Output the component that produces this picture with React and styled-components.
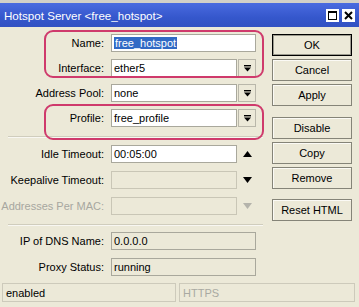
import React from "react"
import styled, { createGlobalStyle } from "styled-components"

const GlobalStyle = createGlobalStyle`
  html, body {
    margin: 0;
    padding: 0;
    background: #ece9d8;
  }
  body {
    font-family: "Liberation Sans", Arial, sans-serif;
    font-size: 11px;
    color: #000;
  }
`

const Window = styled.div`
  width: 359px;
  height: 307px;
  display: flex;
  flex-direction: column;
  background: #ece9d8;
  overflow: hidden;
`

const TopEdge = styled.div`
  height: 3px;
  background: #d2d0c8;
`

const TitleBar = styled.div`
  height: 24px;
  display: flex;
  align-items: center;
  justify-content: space-between;
  padding: 0 4px 0 4px;
  background: linear-gradient(#4a6be0, #3557cc 60%, #3251c2);
  color: #fff;
  font-size: 11.6px;
`

const TitleButtons = styled.div`
  display: flex;
  gap: 3px;
`

const TitleButton = styled.div`
  width: 13px;
  height: 13px;
  background: #fff;
  display: flex;
  align-items: center;
  justify-content: center;
`

const Body = styled.div`
  display: flex;
  padding-top: 7px;
`

const Form = styled.div`
  position: relative;
  width: 268px;
  display: flex;
  flex-direction: column;
`

const Row = styled.div`
  display: flex;
  align-items: center;
  height: 18px;
  margin-top: ${(p) => p.$top || 0}px;
`

const Label = styled.div`
  width: 104px;
  text-align: right;
  margin-right: 7px;
  white-space: nowrap;
  color: ${(p) => (p.$disabled ? "#a7a7a0" : "#000")};
`

const Field = styled.div`
  box-sizing: border-box;
  height: 18px;
  width: ${(p) => p.$w}px;
  border: 1px solid ${(p) => (p.$disabled ? "#c9c6b6" : "#a9a89c")};
  background: ${(p) => (p.$readonly || p.$disabled ? "#ece9d8" : "#fff")};
  padding-left: 2px;
  display: flex;
  align-items: center;
  white-space: nowrap;
`

const Selected = styled.span`
  background: #316ac5;
  color: #fff;
  padding: 0 1px;
`

const DropButton = styled.div`
  box-sizing: border-box;
  width: 18px;
  height: 18px;
  margin-left: 1px;
  border: 1px solid #b9b7aa;
  background: #ece9d8;
  display: flex;
  align-items: center;
  justify-content: center;
`

const Arrow = styled.div`
  width: 18px;
  margin-left: 1px;
  display: flex;
  align-items: center;
  justify-content: center;
`

const Separator = styled.div`
  height: 1px;
  margin: ${(p) => p.$top}px 5px 0 8px;
  background: #d0cdbd;
  border-bottom: 1px solid #f8f7f2;
`

const Highlight = styled.div`
  position: absolute;
  left: 44px;
  width: 220px;
  top: ${(p) => p.$top}px;
  height: ${(p) => p.$h}px;
  box-sizing: border-box;
  border: 2px solid #cf3a6c;
  border-radius: 9px;
  pointer-events: none;
`

const ButtonColumn = styled.div`
  width: 80px;
  margin-left: 4px;
  display: flex;
  flex-direction: column;
`

const Button = styled.div`
  box-sizing: border-box;
  height: 22px;
  margin-top: ${(p) => p.$top ?? 3}px;
  border: 1px solid ${(p) => (p.$default ? "#000" : "#858478")};
  box-shadow: ${(p) =>
    p.$default ? "inset 0 0 0 1px #9c9b8f" : "inset 1px 1px 0 #fbfaf5"};
  background: #ece9d8;
  display: flex;
  align-items: center;
  justify-content: center;
`

const StatusBar = styled.div`
  display: flex;
  gap: 3px;
  padding: 0 4px 0 2px;
  margin-top: 7px;
`

const StatusPanel = styled.div`
  box-sizing: border-box;
  height: 19px;
  width: ${(p) => p.$w}px;
  border: 1px solid #cdcabb;
  padding-left: 3px;
  display: flex;
  align-items: center;
  color: ${(p) => (p.$muted ? "#a9a9a2" : "#000")};
`

const DropGlyph = () => (
  <svg width="7" height="7" viewBox="0 0 7 7">
    <rect x="0" y="0" width="7" height="1.4" fill="#000" />
    <polygon points="0,2.5 7,2.5 3.5,6.5" fill="#000" />
  </svg>
)

const TriGlyph = ({ up, color }) => (
  <svg width="9" height="6" viewBox="0 0 9 6">
    <polygon points={up ? "0,6 9,6 4.5,0" : "0,0 9,0 4.5,6"} fill={color} />
  </svg>
)

export default function App() {
  return (
    <Window>
      <GlobalStyle />
      <TopEdge />
      <TitleBar>
        <span>Hotspot Server &lt;free_hotspot&gt;</span>
        <TitleButtons>
          <TitleButton>
            <svg width="9" height="9" viewBox="0 0 9 9">
              <rect x="0.5" y="0.5" width="8" height="8" fill="none" stroke="#000" />
              <rect x="0" y="0" width="9" height="2" fill="#000" />
            </svg>
          </TitleButton>
          <TitleButton>
            <svg width="9" height="9" viewBox="0 0 9 9">
              <path d="M1 1 L8 8 M8 1 L1 8" stroke="#000" strokeWidth="2" />
            </svg>
          </TitleButton>
        </TitleButtons>
      </TitleBar>

      <Body>
        <Form>
          <Row>
            <Label>Name:</Label>
            <Field $w={145}>
              <Selected>free_hotspot</Selected>
            </Field>
          </Row>
          <Row $top={7}>
            <Label>Interface:</Label>
            <Field $w={126}>ether5</Field>
            <DropButton>
              <DropGlyph />
            </DropButton>
          </Row>
          <Row $top={7}>
            <Label>Address Pool:</Label>
            <Field $w={126}>none</Field>
            <DropButton>
              <DropGlyph />
            </DropButton>
          </Row>
          <Row $top={7}>
            <Label>Profile:</Label>
            <Field $w={126}>free_profile</Field>
            <DropButton>
              <DropGlyph />
            </DropButton>
          </Row>

          <Separator $top={9} />

          <Row $top={7}>
            <Label>Idle Timeout:</Label>
            <Field $w={126}>00:05:00</Field>
            <Arrow>
              <TriGlyph up color="#000" />
            </Arrow>
          </Row>
          <Row $top={8}>
            <Label>Keepalive Timeout:</Label>
            <Field $w={126} $disabled />
            <Arrow>
              <TriGlyph color="#000" />
            </Arrow>
          </Row>
          <Row $top={8}>
            <Label $disabled>Addresses Per MAC:</Label>
            <Field $w={126} $disabled />
            <Arrow>
              <TriGlyph color="#b4b3ab" />
            </Arrow>
          </Row>

          <Separator $top={9} />

          <Row $top={6}>
            <Label>IP of DNS Name:</Label>
            <Field $w={145} $readonly>0.0.0.0</Field>
          </Row>
          <Row $top={8}>
            <Label>Proxy Status:</Label>
            <Field $w={145} $readonly>running</Field>
          </Row>

          <Highlight $top={-4} $h={48} />
          <Highlight $top={70} $h={36} />
        </Form>

        <ButtonColumn>
          <Button $default $top={0}>OK</Button>
          <Button>Cancel</Button>
          <Button>Apply</Button>
          <Button $top={11}>Disable</Button>
          <Button>Copy</Button>
          <Button>Remove</Button>
          <Button $top={10}>Reset HTML</Button>
        </ButtonColumn>
      </Body>

      <StatusBar>
        <StatusPanel $w={174}>enabled</StatusPanel>
        <StatusPanel $w={176} $muted>HTTPS</StatusPanel>
      </StatusBar>
    </Window>
  )
}
